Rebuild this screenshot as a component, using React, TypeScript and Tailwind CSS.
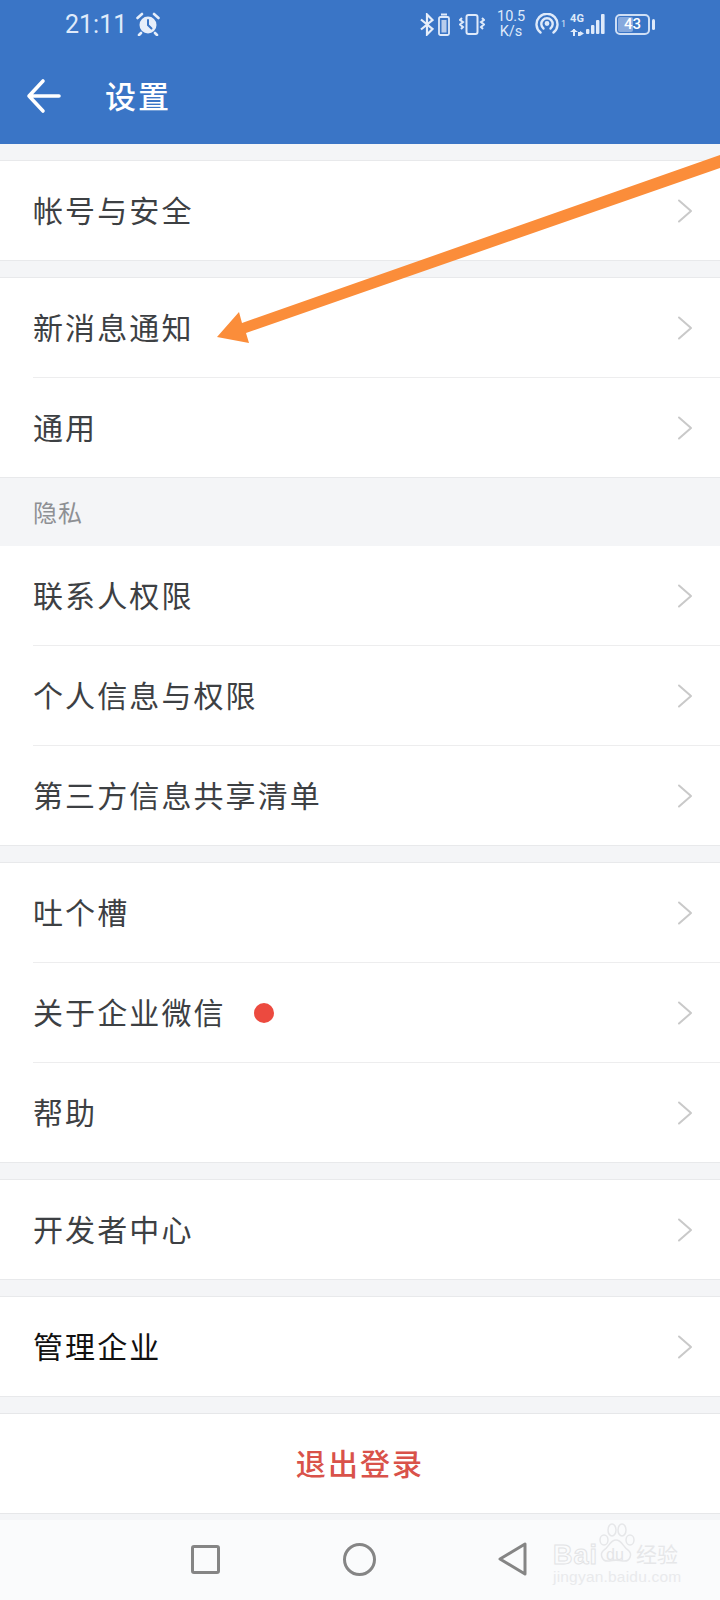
type RowProps = {
  label: string;
  dark?: boolean;
  dot?: boolean;
  inset?: boolean;
};

function Chevron() {
  return (
    <svg className="ml-auto" width="16" height="24" viewBox="0 0 16 24" fill="none" stroke="#c9c9c9" strokeWidth="2" strokeLinecap="round" strokeLinejoin="round">
      <path d="M2 1.5 14 12 2 22.5" />
    </svg>
  );
}

function Row({ label, dark, dot, inset }: RowProps) {
  return (
    <div className={`h-[100px] pl-[33px] bg-white border-b ${inset ? "border-white" : "border-[#e8e9eb]"}`}>
      <div className={`h-[100px] pr-[27px] flex items-center ${inset ? "border-b border-[#ededee]" : ""}`}>
        <span className={`mb-[4px] text-[30px] leading-none tracking-[2.1px] ${dark ? "text-[#111]" : "text-[#3d4043]"}`}>{label}</span>
        {dot && <span className="ml-[28px] w-5 h-5 rounded-full bg-[#ec4a3f]" />}
        <Chevron />
      </div>
    </div>
  );
}

function Group({ rows, noTop }: { rows: RowProps[]; noTop?: boolean }) {
  return (
    <div className={noTop ? "mb-[16px]" : "border-t border-[#e8e9eb] mb-[16px]"}>
      {rows.map((r, i) => (
        <Row key={r.label} {...r} inset={i < rows.length - 1} />
      ))}
    </div>
  );
}

function StatusBar() {
  return (
    <div className="h-[48px] flex items-center pl-[65px] pr-[65px] text-[#dfeafa] font-['Roboto',sans-serif]">
      <span className="text-[25px] leading-none">21:11</span>
      <svg className="ml-[9px]" width="24" height="24" viewBox="0 0 24 24" fill="none">
        <circle cx="12" cy="13" r="8.5" fill="#e6eefa" />
        <path d="M12 8v5l3.5 3.5" stroke="#3a75c6" strokeWidth="2" strokeLinecap="round" />
        <path d="M1.5 6 6 2M22.5 6 18 2M5 21l-2 2M19 21l2 2" stroke="#e6eefa" strokeWidth="2.6" strokeLinecap="round" />
      </svg>
      <div className="ml-auto flex items-center">
        <svg width="14" height="23" viewBox="0 0 14 23" fill="none" stroke="#e6eefa" strokeWidth="2.2">
          <path d="M1 6.5 12.5 16 7 21.5V1.5L12.5 7 1 16.5" />
        </svg>
        <svg className="ml-[4px]" width="12" height="23" viewBox="0 0 12 23" fill="none">
          <rect x="3" y="0.5" width="6" height="2" fill="#dfeafa" />
          <rect x="1" y="4" width="10" height="18" rx="1.5" stroke="#dfeafa" strokeWidth="1.8" />
          <rect x="3.5" y="7" width="5" height="12.5" fill="#b9cdec" />
        </svg>
        <svg className="ml-[9px]" width="26" height="21" viewBox="0 0 26 21" fill="none" stroke="#dfeafa" strokeWidth="2">
          <rect x="7.5" y="1" width="11" height="19" rx="2" />
          <path d="M3 4 1 6l3 2-3 2.5 3 2.5-2 2M23 4l2 2-3 2 3 2.5-3 2.5 2 2" />
        </svg>
        <div className="ml-[12px] w-[28px] text-[14.5px] leading-[15px] text-center">
          <div>10.5</div>
          <div>K/s</div>
        </div>
        <svg className="ml-[10px]" width="24" height="22" viewBox="0 0 24 22" fill="none" stroke="#dfeafa" strokeWidth="2.4" strokeLinecap="round">
          <path d="M5.5 19.5a10.5 10.5 0 1 1 13 0" />
          <path d="M8.5 15.5a5.7 5.7 0 1 1 7 0" />
          <circle cx="12" cy="10.5" r="1.2" fill="#dfeafa" />
        </svg>
        <span className="self-start mt-[11px] ml-[2px] w-[4px] text-[9px] leading-none">1</span>
        <div className="ml-[5px] w-[14px] flex flex-col items-center font-bold">
          <span className="text-[11px] leading-[12px]">4G</span>
          <svg className="mt-[4px]" width="14" height="7" viewBox="0 0 14 7" fill="#dfeafa">
            <rect x="3" y="0" width="2" height="7" />
            <path d="M0 3 4 0 8 3zM8 3h2v4H8zM10 7l4-2.500-4-2.500z" />
          </svg>
        </div>
        <svg className="ml-[2px]" width="20" height="22" viewBox="0 0 20 22" fill="#dfeafa">
          <rect x="0" y="16" width="3.4" height="5" rx="1" />
          <rect x="5" y="12" width="3.4" height="9" rx="1" />
          <rect x="10" y="7" width="3.4" height="14" rx="1" />
          <rect x="15" y="1" width="3.6" height="20" rx="1" />
        </svg>
        <div className="ml-[9px] relative w-[35px] h-[21px] border-2 border-[#cfdff5] rounded-[5px] flex items-center justify-center">
          <div className="absolute left-[1px] top-[1px] bottom-[1px] w-[15px] rounded-[2px] bg-[#86a9dd]" />
          <span className="relative text-[15px] leading-none font-medium text-white">43</span>
        </div>
        <div className="ml-[2px] w-[3px] h-[11px] rounded-full bg-[#dfeafa]" />
      </div>
    </div>
  );
}

export default function App() {
  return (
    <div className="relative w-[720px] h-[1600px] overflow-hidden flex flex-col bg-[#f4f5f7] font-['Noto_Sans_CJK_SC',sans-serif]">
      <div className="h-[144px] bg-[#3a75c6] shrink-0">
        <StatusBar />
        <div className="h-[96px] flex items-center pl-[26px]">
          <svg width="36" height="36" viewBox="0 0 36 36" fill="none" stroke="#fff" strokeWidth="3.6" strokeLinecap="round" strokeLinejoin="round">
            <path d="M33 18H3M17 3 3 18l14 15" />
          </svg>
          <span className="ml-[43px] mb-[4px] text-[31px] leading-none font-medium tracking-[2px] text-white">设置</span>
        </div>
      </div>

      <div className="pt-[16px]">
        <Group rows={[{ label: "帐号与安全" }]} />
        <div className="border-t border-[#e8e9eb]">
          <Row label="新消息通知" inset />
          <Row label="通用" />
        </div>
        <div className="h-[68px] pl-[33px] flex items-center text-[24px] leading-none tracking-[1px] text-[#8e9094]">隐私</div>
        <Group
          noTop
          rows={[{ label: "联系人权限" }, { label: "个人信息与权限" }, { label: "第三方信息共享清单" }]}
        />
        <Group rows={[{ label: "吐个槽" }, { label: "关于企业微信", dot: true }, { label: "帮助" }]} />
        <Group rows={[{ label: "开发者中心" }]} />
        <Group rows={[{ label: "管理企业", dark: true }]} />
        <div className="h-[101px] border-y border-[#e6e7e9] bg-white flex items-center justify-center">
          <span className="mb-[4px] text-[30px] leading-none font-medium tracking-[2.1px] text-[#d9524a]">退出登录</span>
        </div>
      </div>

      <div className="mt-[6px] flex-1 bg-[#fafbfc] relative flex items-center pb-[2px] pl-[191px]">
        <div className="w-[29px] h-[29px] border-[3px] border-[#858585] rounded-[3px]" />
        <div className="ml-[123px] w-[33px] h-[33px] border-[3px] border-[#858585] rounded-full" />
        <svg className="ml-[122px]" width="29" height="34" viewBox="0 0 29 34" fill="none" stroke="#858585" strokeWidth="3" strokeLinejoin="round">
          <path d="M27 2v30L2 17z" />
        </svg>

        {/* baidu watermark */}
        <div className="absolute left-[553px] top-[3px] w-[128px] h-[64px]">
          <svg className="absolute left-[42px] top-0" width="42" height="42" viewBox="0 0 42 42" fill="none" stroke="#e6e7e9" strokeWidth="1.5">
            <ellipse cx="9" cy="17" rx="4" ry="5" />
            <ellipse cx="17" cy="7" rx="4" ry="6" />
            <ellipse cx="27" cy="7" rx="4" ry="6" />
            <ellipse cx="35" cy="17" rx="4" ry="5" />
            <path d="M21 17c-6 0-7 7-12 10-5 4-2 12 5 11 4-1 10-1 14 0 7 1 10-7 5-11-5-3-6-10-12-10z" />
          </svg>
          <span className="absolute left-0 top-[19px] text-[27px] leading-none font-['Liberation_Sans',sans-serif] font-bold tracking-[1px] text-transparent [-webkit-text-stroke:1px_#e2e3e5]">Bai</span>
          <span className="absolute left-[53px] top-[24px] text-[16px] leading-none font-['Liberation_Sans',sans-serif] text-[#e4e5e7]">du</span>
          <span className="absolute left-[83px] top-[20px] text-[21px] leading-none text-[#e6e7e9]">经验</span>
          <span className="absolute left-0 top-[46px] text-[15.5px] leading-none tracking-[0.2px] font-['Liberation_Sans',sans-serif] text-[#e9eaec]">jingyan.baidu.com</span>
        </div>
      </div>

      {/* orange annotation arrow */}
      <svg className="absolute left-0 top-0 pointer-events-none" width="720" height="400" viewBox="0 0 720 400" fill="#fb8d3a">
        <polygon points="720,155 720,168 246,333 249,343 217,337 239,312 242,323" />
      </svg>
    </div>
  );
}
